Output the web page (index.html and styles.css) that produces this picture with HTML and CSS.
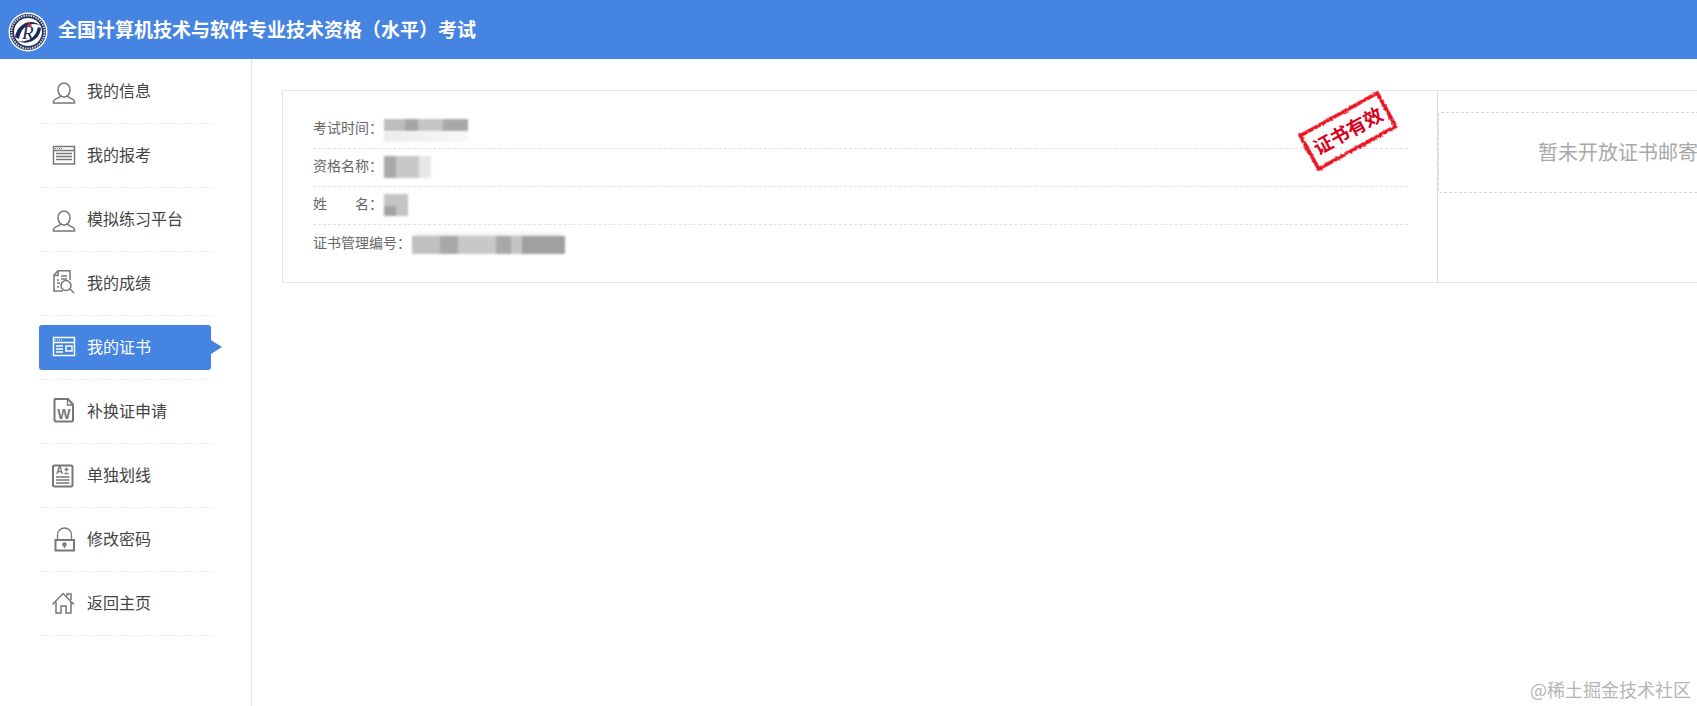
FILE: index.html
```html
<!DOCTYPE html>
<html lang="zh-CN">
<head>
<meta charset="utf-8">
<title>我的证书</title>
<link rel="stylesheet" href="styles.css">
</head>
<body>
<header class="topbar">
  <svg class="logo" viewBox="0 0 40 40">
    <circle cx="20" cy="20" r="19.5" fill="#fff"/>
    <circle cx="20" cy="20" r="18" fill="#1d2a55"/>
    <circle cx="20" cy="20" r="16.500" fill="none" stroke="#cfd4e4" stroke-width="2" stroke-dasharray="1.5 1"/>
    <circle cx="20" cy="20" r="14" fill="#fff"/>
    <path d="M7 25C9 12 23 5 33 14C25 9 13 13 11 27Z" fill="#1d2a55"/>
    <path d="M33 16C32 27 21 34 10 29C20 31 28 25 30 15Z" fill="#1d2a55"/>
    <text class="logo-r" x="14" y="27">R</text>
    <path d="M19.500 13h4M21.500 11v4" stroke="#d8232a" stroke-width="1.6"/>
  </svg>
  <h1 class="title">全国计算机技术与软件专业技术资格（水平）考试</h1>
</header>
<div class="layout">
  <nav class="sidebar">
    <ul class="menu">
      <li class="menu-item"><a class="menu-link">
        <svg class="icon" viewBox="0 0 24 28"><ellipse cx="12" cy="12" rx="6" ry="7"/><path d="M8.500 18c0 2-7 2.500-7 5.500v1.500h21v-1.500c0-3-7-3.500-7-5.500"/></svg>
        <span>我的信息</span></a></li>
      <li class="menu-item"><a class="menu-link">
        <svg class="icon" viewBox="0 0 24 28"><rect x="1.500" y="4.500" width="21" height="17.500"/><path d="M1.500 8.500h21M4 11.500h16M4 14.500h16M4 17.500h16"/><path class="dots" d="M3 6.500h7"/></svg>
        <span>我的报考</span></a></li>
      <li class="menu-item"><a class="menu-link">
        <svg class="icon" viewBox="0 0 24 28"><ellipse cx="12" cy="12" rx="6" ry="7"/><path d="M8.500 18c0 2-7 2.500-7 5.500v1.500h21v-1.500c0-3-7-3.500-7-5.500"/></svg>
        <span>模拟练习平台</span></a></li>
      <li class="menu-item"><a class="menu-link">
        <svg class="icon" viewBox="0 0 24 28"><path d="M11 21H2V5L6 .8h12V10"/><path d="M6 1v4.500H2"/><path d="M9 6h6M9 9h6M5 10h2M5 13h3M5 17h2"/><circle cx="14" cy="15.500" r="5"/><path d="M18 19l4 4"/></svg>
        <span>我的成绩</span></a></li>
      <li class="menu-item menu-item-active"><a class="menu-link">
        <svg class="icon" viewBox="0 0 24 28"><rect x="1.500" y="3.500" width="21" height="18"/><path d="M1.500 8.500h21M4 12h7M4 15h7M4 18h7"/><rect x="14" y="12" width="6" height="5"/><path class="dots" d="M3 6h7"/></svg>
        <span>我的证书</span></a></li>
      <li class="menu-item"><a class="menu-link">
        <svg class="icon icon-heavy" viewBox="0 0 24 28"><path d="M3 1h13l5 5.500V22a1.500 1.500 0 0 1-1.500 1.500h-16A1.500 1.500 0 0 1 2.500 22V2z"/><path class="thin" d="M15.500 1v6h5.500"/><text class="icon-w" x="11.800" y="20.500">W</text></svg>
        <span>补换证申请</span></a></li>
      <li class="menu-item"><a class="menu-link">
        <svg class="icon icon-heavy" viewBox="0 0 24 28"><rect x="1" y="3.500" width="19.500" height="21" rx="1.500"/><text class="icon-a" x="4" y="12">A</text><path class="thin" d="M12.500 7.500h4M14.500 5.500v4M12.500 11.500h4M4 15h13.500M4 18h13.500M4 21h13.500"/></svg>
        <span>单独划线</span></a></li>
      <li class="menu-item"><a class="menu-link">
        <svg class="icon icon-heavy" viewBox="0 0 24 28"><rect x="3.500" y="14" width="18.500" height="10.500"/><path class="thin" d="M5.500 14V9a7 7 0 0 1 14 0v5"/><circle cx="12.500" cy="18.500" r="1.200"/><path class="thin" d="M12.500 19.500v2.500"/></svg>
        <span>修改密码</span></a></li>
      <li class="menu-item"><a class="menu-link">
        <svg class="icon" viewBox="0 0 24 28"><path d="M.5 14.500 11 3.500l11 11"/><path d="M4 12v11h5v-7h5v7h5V12"/><path d="M15 6V4h4v6"/></svg>
        <span>返回主页</span></a></li>
    </ul>
  </nav>
  <main class="content">
    <section class="card">
      <div class="info">
        <svg class="stamp" viewBox="0 0 100 80">
          <defs>
            <filter id="rough" x="-10%" y="-20%" width="120%" height="140%">
              <feTurbulence type="fractalNoise" baseFrequency="0.35" numOctaves="2" seed="4"/>
              <feDisplacementMap in="SourceGraphic" scale="3.500"/>
            </filter>
          </defs>
          <g transform="rotate(-29 50 40)">
            <rect class="stamp-frame" x="6" y="21" width="88" height="38" filter="url(#rough)"/>
            <text class="stamp-text" x="50" y="47">证书有效</text>
          </g>
        </svg>
        <div class="row"><span class="label">考试时间：</span><span class="blur blur-time"><i class="bar-dark"></i><i class="bar-light"></i></span></div>
        <div class="row"><span class="label">资格名称：</span><span class="blur blur-title"></span></div>
        <div class="row"><span class="label">姓　　名：</span><span class="blur blur-name"></span></div>
        <div class="row"><span class="label">证书管理编号：</span><span class="blur blur-number"></span></div>
      </div>
      <div class="mail">
        <div class="mail-box">暂未开放证书邮寄</div>
      </div>
    </section>
  </main>
</div>
<div class="watermark">@稀土掘金技术社区</div>
</body>
</html>
```
FILE: styles.css
```css
* { box-sizing: border-box; }
html, body { margin: 0; height: 706px; overflow: hidden; background: #fff; }
body { font-family: "Noto Sans CJK SC", "Noto Sans", sans-serif; color: #444; position: relative; }

.topbar { height: 59px; background: #4684e2; display: flex; align-items: center; padding-left: 8px; gap: 10px; }
.logo { width: 40px; height: 40px; flex: none; margin-top: 5px; }
.logo-r { font: italic 400 19px "Liberation Serif", serif; fill: #1d2a55; }
.title { margin: 0 0 2px; font-size: 19px; line-height: 57px; font-weight: 700; color: #fff; white-space: nowrap; }

.layout { display: flex; height: 647px; }
.sidebar { width: 252px; flex: none; border-right: 1px solid #e6e6e6; padding: 1px 0 0 40px; }
.menu { list-style: none; margin: 0; padding: 0; width: 172px; }
.menu-item { height: 64px; border-bottom: 1px dashed #ebebeb; display: flex; align-items: center; }
.menu-link { display: flex; align-items: center; gap: 11px; height: 45px; width: 172px; margin-left: -1px; padding-left: 13px; font-size: 16px; color: #444; border-radius: 3px; position: relative; }
.menu-link span { margin-bottom: 3px; }
.icon { width: 24px; height: 28px; flex: none; overflow: visible; fill: none; stroke: #777; stroke-width: 1.5; }
.icon-heavy { stroke-width: 2; }
.icon .thin { stroke-width: 1.3; }
.icon .dots { stroke-dasharray: 1 1; stroke-width: 1; }
.icon text { stroke: none; fill: #777; text-anchor: middle; font-family: "Liberation Sans", sans-serif; font-weight: 700; }
.icon-w { font-size: 14px; }
.icon .icon-a { font-size: 10px; text-anchor: start; }
.menu-item-active .menu-link { background: #4684e2; color: #fff; }
.menu-item-active .menu-link::after { content: ""; position: absolute; left: 100%; top: 15px; border-left: 11px solid #4684e2; border-top: 7.5px solid transparent; border-bottom: 7.5px solid transparent; }
.menu-item-active .icon { stroke: #fff; }

.content { flex: 1; min-width: 0; padding: 31px 0 0 30px; }
.card { display: flex; width: 1600px; height: 193px; border: 1px solid #e4e4e4; }
.info { width: 1155px; flex: none; padding: 20px 29px 0 30px; border-right: 1px solid #dcdcdc; position: relative; }
.row { height: 38px; display: flex; align-items: center; border-bottom: 1px dashed #e2e2e2; font-size: 14px; color: #666; }
.row:last-of-type { border-bottom: 0; }
.label { white-space: nowrap; margin: 0 1px 5px 0; }
.blur { display: block; flex: none; filter: blur(0.8px); }
.blur-time { width: 84px; display: flex; flex-direction: column; gap: 1px; margin-top: 1px; }
.bar-dark { display: block; height: 12px; background: linear-gradient(90deg, #bdbdbd 0 25%, #a6a6a6 25% 40%, #c4c4c4 40% 70%, #a8a8a8 70%); }
.bar-light { display: block; height: 10px; background: linear-gradient(90deg, #ececec, #f4f4f4 70%, #f8f8f8); }
.blur-title { width: 47px; height: 22px; margin-bottom: 2px; background: linear-gradient(90deg, #a9a9a9 0 25%, #c8c8c8 25% 75%, #e8e8e8 75%); }
.blur-name { width: 24px; height: 22px; margin-bottom: 2px; background: linear-gradient(0deg, #a3a3a3 0 10px, transparent 10px), linear-gradient(90deg, #c4c4c4, #c4c4c4); background-size: 12px 100%, 100% 100%; background-repeat: no-repeat; }
.blur-number { width: 153px; height: 18px; margin-top: 2px; box-shadow: 0 -6px 4px -3px #efefef; background: linear-gradient(90deg, #c0c0c0 0 18%, #a8a8a8 18% 30%, #c8c8c8 30% 55%, #a8a8a8 55% 65%, #c4c4c4 65% 72%, #a0a0a0 72%); }

.stamp { position: absolute; left: 1015px; top: 0; width: 100px; height: 80px; overflow: visible; }
.stamp-frame { fill: none; stroke: #ea0a1e; stroke-width: 3.5; }
.stamp-text { fill: #d9001b; font-size: 19px; font-weight: 700; text-anchor: middle; }

.mail { flex: 1; padding-top: 21px; }
.mail-box { height: 81px; border: 1px dashed #d8d8d8; border-right: 0; border-radius: 3px 0 0 3px; padding-left: 99px; font-size: 20px; line-height: 78px; color: #a8a8a8; white-space: nowrap; }

.watermark { position: absolute; right: 6px; bottom: 4px; font-size: 18px; line-height: 26px; color: #b4b4b4; white-space: nowrap; }
```
